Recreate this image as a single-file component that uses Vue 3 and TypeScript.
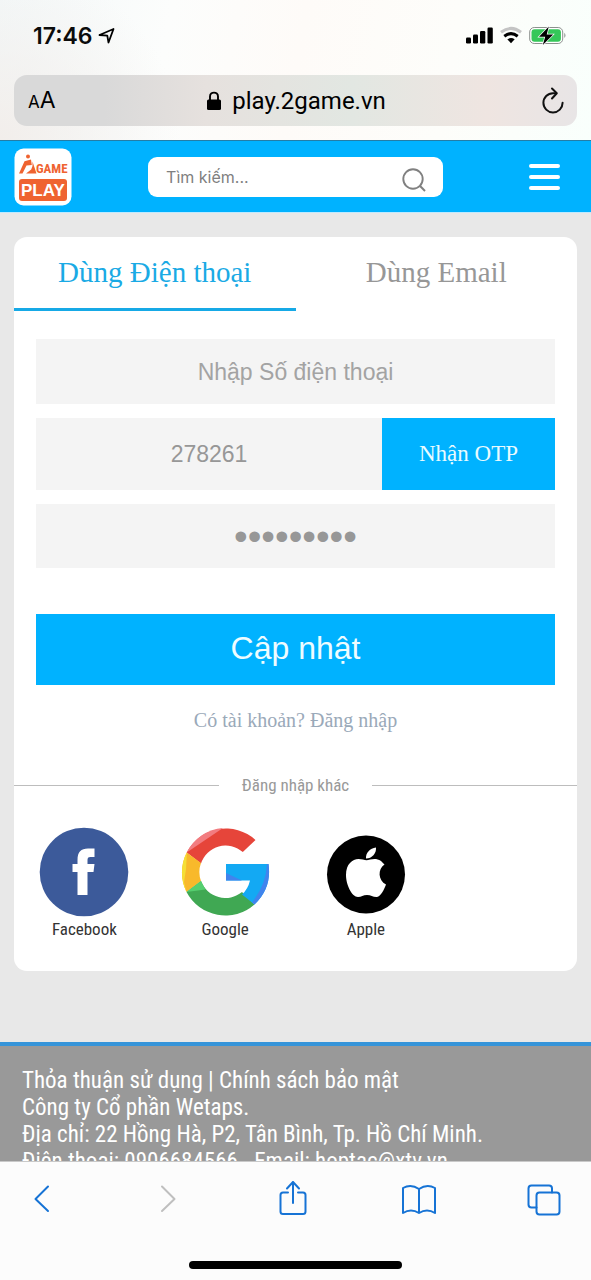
<script setup lang="ts">
import { ref } from 'vue'

type TabKey = 'phone' | 'email'

const tabs: { key: TabKey; label: string }[] = [
  { key: 'phone', label: 'Dùng Điện thoại' },
  { key: 'email', label: 'Dùng Email' },
]
const active = ref<TabKey>('phone')
const search = ref('')
const phone = ref('')
const otp = ref('278261')
const password = ref('matkhau12')
</script>

<template>
  <div class="screen">
    <header class="browser">
      <div class="status">
        <span class="clock">17:46</span>
        <svg class="locate" width="17" height="17" viewBox="0 0 17 17" aria-hidden="true">
          <path d="M1.500 8 15.500 2 10.500 15.500 9.300 8.700Z" fill="none" stroke="#000" stroke-width="1.800" stroke-linejoin="round" />
        </svg>
        <span class="grow"></span>
        <svg width="102" height="20" viewBox="0 0 102 20" aria-hidden="true">
          <g fill="#000">
            <rect x="1" y="11.500" width="5" height="6" rx="1.200" />
            <rect x="8" y="8.500" width="5" height="9" rx="1.200" />
            <rect x="15" y="5" width="5.300" height="12.500" rx="1.200" />
            <rect x="22.500" y="1.500" width="5.300" height="16" rx="1.200" />
          </g>
          <g fill="none" stroke-width="3">
            <path d="M36 6.300Q46 -1.500 56 6.300" stroke="#c4c4c4" />
            <path d="M39.300 10.200Q46 5 52.700 10.200" stroke="#000" />
          </g>
          <path d="M42.300 13.300Q46 10.800 49.700 13.300L46 17.300Z" fill="#000" />
          <rect x="64.700" y="1.500" width="33" height="16" rx="4.500" fill="#fff" stroke="#8c918d" />
          <rect x="66.500" y="3.300" width="29.400" height="12.400" rx="3" fill="#35c759" />
          <path d="M99.300 6.700q2.400 2.700 0 5.400Z" fill="#8c918d" />
          <path d="M83.800 0.500 74 10.700h6.200L77.800 19 88.200 8.500h-6.500Z" fill="#000" stroke="#fff" stroke-width="1.400" paint-order="stroke" />
        </svg>
      </div>
      <div class="address">
        <button class="aa" type="button" aria-label="Cỡ chữ"><span class="small-a">A</span>A</button>
        <div class="url">
          <svg width="14" height="20" viewBox="0 0 14 20" aria-hidden="true">
            <rect x="0" y="8.500" width="14" height="10.500" rx="1.500" />
            <path d="M3 9V5.500C3 0.300 11 0.300 11 5.500V9" fill="none" stroke="#000" stroke-width="1.900" />
          </svg>
          <span>play.2game.vn</span>
        </div>
        <button class="reload" type="button" aria-label="Tải lại">
          <svg width="24" height="28" viewBox="0 0 24 28">
            <path d="M14.500 6.200H12A9.600 9.600 0 1 0 21.600 15.800" fill="none" stroke="#111" stroke-width="2" stroke-linecap="round" />
            <path d="M11 1.500 15.800 6.300 11 11.500" fill="none" stroke="#111" stroke-width="2" stroke-linecap="round" stroke-linejoin="round" />
          </svg>
        </button>
      </div>
    </header>

    <div class="page">
      <nav class="topbar">
        <a class="logo" href="#" aria-label="2GAME PLAY">
          <svg width="58" height="58" viewBox="0 0 58 58">
            <rect x="0.500" y="0.500" width="57" height="57" rx="9" fill="#fff" />
            <circle cx="14" cy="8.500" r="2" fill="#ef6330" />
            <path d="M10.500 13.300 17 11.500 17.800 17 12.500 17.500 8.500 25.500H5L9.500 15.500Z" fill="#ef6330" />
            <path d="M18.500 13.500 22.500 25.500H12L17.200 21.500 18.500 18Z" fill="#ef6330" />
            <rect x="5" y="31" width="48" height="22" rx="3" fill="#ef6330" />
            <text class="logo-game" x="22" y="25">GAME</text>
            <text class="logo-play" x="7" y="48">PLAY</text>
          </svg>
        </a>
        <form class="search" @submit.prevent>
          <input v-model="search" type="search" placeholder="Tìm kiếm..." aria-label="Tìm kiếm" />
          <button type="submit" aria-label="Tìm">
            <svg width="26" height="26" viewBox="0 0 26 26">
              <circle cx="12" cy="12" r="9.700" fill="none" stroke="#808080" stroke-width="1.900" />
              <path d="M18.800 18.800 24 24" stroke="#808080" stroke-width="2" />
            </svg>
          </button>
        </form>
        <button class="menu" type="button" aria-label="Menu"><i></i><i></i><i></i></button>
      </nav>

      <main class="card">
        <div class="tabs" role="tablist">
          <button
            v-for="t in tabs"
            :key="t.key"
            type="button"
            role="tab"
            :aria-selected="active === t.key"
            :class="{ active: active === t.key }"
            @click="active = t.key"
          >{{ t.label }}</button>
        </div>

        <form class="fields" @submit.prevent>
          <input v-model="phone" class="field" type="tel" placeholder="Nhập Số điện thoại" aria-label="Số điện thoại" />
          <div class="otp">
            <input v-model="otp" class="field" type="text" inputmode="numeric" aria-label="Mã OTP" />
            <button type="button">Nhận OTP</button>
          </div>
          <input v-model="password" class="field secret" type="password" autocomplete="off" aria-label="Mật khẩu" />
          <button class="submit" type="submit">Cập nhật</button>
        </form>
        <a class="login" href="#">Có tài khoản? Đăng nhập</a>

        <div class="other"><span>Đăng nhập khác</span></div>

        <div class="social">
          <a href="#">
            <svg width="90" height="90" viewBox="0 0 90 90" aria-hidden="true">
              <circle cx="45" cy="45" r="44.300" fill="#3c5a9a" />
              <path d="M38.500 68V45H33.500V37H38.500V33C38.500 25 42 21.500 49 21.500H55.500V30H51.500C49 30 48.500 31 48.500 33.500V37H55.500L54.500 45H48.500V68Z" fill="#fff" />
            </svg>
            <span>Facebook</span>
          </a>
          <a href="#">
            <svg width="90" height="90" viewBox="0 0 90 90" aria-hidden="true">
              <path d="M6.700 25.600A44 44 0 0 1 75.500 13L62.800 25A26 26 0 0 0 21 36.500Z" fill="#e6453a" />
              <path d="M6.700 25.600A44 44 0 0 1 43 1Z" fill="#f27c80" />
              <path d="M6.700 25.600 21 36A26 26 0 0 0 21 54L6.500 65A44 44 0 0 1 6.700 25.600Z" fill="#f8b92b" />
              <path d="M6.700 25.600A44 44 0 0 0 6.500 65L4 55Q7 40 6.700 25.600Z" fill="#f5df35" />
              <path d="M6.500 65 21 54A26 26 0 0 0 62 65L74.500 77.500A44 44 0 0 1 6.500 65Z" fill="#40a853" />
              <path d="M6.500 65 21 54 25.500 62.500Z" fill="#55cf6f" />
              <path d="M46 37H88.500Q92 61 74.500 77.500L62 67.500Q68 62 70 53.500H46Z" fill="#13a9f3" />
              <path d="M46 46 62 53.500H46ZM87 37H88.500Q92 61 74.500 77.500L72 75.500Q86 58 87 37Z" fill="#4184ed" />
            </svg>
            <span>Google</span>
          </a>
          <a href="#">
            <svg width="90" height="90" viewBox="0 0 90 90" aria-hidden="true">
              <circle cx="45" cy="47.500" r="39" />
              <path d="M45.500 33.200C49 33.200 54 30 60 34L63.500 37.500C56.500 42 57 53.500 65 57.500C63.500 62 59.500 70 55.500 70C51.500 70 50 68 46 68C42 68 40.500 70 37 70C31 70 25 58 25 48C25 37 31.500 32 37.500 32C40.500 32 43.500 33.200 45.500 33.200Z" fill="#fff" />
              <path d="M45 31.500C44.500 26 49 21 55 20.500C55.500 26.500 51 31.500 45 31.500Z" fill="#fff" />
            </svg>
            <span>Apple</span>
          </a>
        </div>
      </main>

      <footer class="footer">
        <div><a href="#">Thỏa thuận sử dụng</a> | <a href="#">Chính sách bảo mật</a></div>
        <div>Công ty Cổ phần Wetaps.</div>
        <div>Địa chỉ: 22 Hồng Hà, P2, Tân Bình, Tp. Hồ Chí Minh.</div>
        <div>Điện thoại: 0906684566 - Email: hoptac@xtv.vn</div>
      </footer>
    </div>

    <div class="toolbar">
      <nav class="tools">
        <button type="button" aria-label="Quay lại">
          <svg width="34" height="36" viewBox="0 0 34 36"><path d="M23 6.500 10.500 19 23 31" /></svg>
        </button>
        <button type="button" class="off" aria-label="Tiếp" disabled>
          <svg width="34" height="36" viewBox="0 0 34 36"><path d="M11 6.500 23.500 19 11 31" /></svg>
        </button>
        <button type="button" aria-label="Chia sẻ">
          <svg width="34" height="36" viewBox="0 0 34 36">
            <path d="M12 12.500H7Q4.500 12.500 4.500 15V31.500Q4.500 34 7 34H27Q29.500 34 29.500 31.500V15Q29.500 12.500 27 12.500H22M17 23V2M11 8.500 17 2 23 8.500" />
          </svg>
        </button>
        <button type="button" aria-label="Dấu trang">
          <svg width="34" height="36" viewBox="0 0 34 36">
            <path d="M17 9Q9 3.500 1 8V33Q9 28 17 33Q25 28 33 33V8Q25 3.500 17 9V33" />
          </svg>
        </button>
        <button type="button" aria-label="Thẻ">
          <svg width="34" height="36" viewBox="0 0 34 36">
            <rect x="9.500" y="12.500" width="23" height="22" rx="3" />
            <path d="M9.500 27.500H4.500Q1.500 27.500 1.500 24.500V8.500Q1.500 5.500 4.500 5.500H22Q25 5.500 25 8.500V12.500" />
          </svg>
        </button>
      </nav>
      <div class="home"></div>
    </div>
  </div>
</template>

<style>
body {
  margin: 0;
}
</style>

<style scoped>
* {
  box-sizing: border-box;
}
button,
input {
  border: 0;
  border-radius: 0;
  padding: 0;
  margin: 0;
  background: none;
  font: inherit;
  color: inherit;
  outline: 0;
  min-width: 0;
}
a {
  color: inherit;
  text-decoration: none;
}
svg {
  display: block;
}
.screen {
  height: 100vh;
  display: flex;
  flex-direction: column;
  overflow: hidden;
  background: #e8e8e8;
  font-family: "Liberation Sans", Arial, sans-serif;
}
.browser {
  flex: none;
  padding: 0 14px 14px;
  background:
    radial-gradient(circle at 0 100%, #f2eeeb 0, rgba(242, 238, 235, 0) 180px),
    linear-gradient(100deg, #f3f8f9 0%, #fcfdfc 28%, #fefbf8 50%, #fdfdfa 75%, #f9fffc 100%);
}
.status {
  height: 75px;
  padding: 0 10px 4px 19px;
  display: flex;
  align-items: center;
}
.clock {
  font: 600 23px/28px Inter, sans-serif;
  color: #0b0b0b;
}
.locate {
  margin-left: 5px;
}
.grow {
  flex: 1;
}
.address {
  height: 51px;
  border-radius: 13px;
  padding: 0 12px 0 14px;
  display: grid;
  grid-template-columns: 60px 1fr 60px;
  align-items: center;
  background: linear-gradient(90deg, #d9d9d9 0%, #d9d9d9 16%, #e6e1de 34%, #e2e7e2 60%, #efe5e1 84%, #e8e5e6 100%);
  color: #000;
}
.aa {
  text-align: left;
  font: 23px/28px Inter, sans-serif;
}
.small-a {
  font-size: 17px;
}
.url {
  display: flex;
  justify-content: center;
  align-items: center;
  gap: 11px;
  font: 24px/30px Roboto, sans-serif;
}
.reload {
  justify-self: end;
}
.page {
  flex: 1;
  min-height: 0;
  overflow: hidden;
}
.topbar {
  height: 73px;
  border-top: 1px solid #247da6;
  border-bottom: 1px solid #bfeaff;
  background: #00b2ff;
  display: flex;
  align-items: center;
  justify-content: space-between;
  padding: 0 31px 0 14px;
}
.logo-game {
  font: 700 13px "Roboto Condensed", "Liberation Sans Narrow", Roboto, sans-serif;
  fill: #ef6330;
}
.logo-play {
  font: 700 17px "Liberation Sans", sans-serif;
  fill: #fff;
}
.search {
  width: 54%;
  height: 40px;
  background: #fff;
  border-radius: 9px;
  display: flex;
  align-items: center;
  padding: 0 16px 0 18px;
}
.search input {
  flex: 1;
  font: 16px/24px Inter, sans-serif;
  color: #777;
  appearance: none;
}
.search input::placeholder {
  color: #808080;
  opacity: 1;
}
.search button {
  padding-top: 6px;
}
.menu {
  width: 41px;
  padding-left: 10px;
  display: grid;
  gap: 7px;
}
.menu i {
  height: 4px;
  border-radius: 2px;
  background: #fff;
}
.card {
  margin: 24px 14px 71px;
  background: #fff;
  border-radius: 13px;
  overflow: hidden;
}
.tabs {
  display: grid;
  grid-template-columns: 1fr 1fr;
}
.tabs button {
  height: 74px;
  padding-bottom: 1px;
  border-bottom: 3px solid transparent;
  font: 29px/32px "Liberation Serif", "Times New Roman", serif;
  color: #979797;
}
.tabs .active {
  color: #1aaae5;
  border-color: #16a9e6;
}
.fields {
  padding: 28px 22px 0;
  display: grid;
  gap: 14px;
}
.field {
  width: 100%;
  height: 65px;
  padding-top: 2px;
  background: #f4f4f4;
  text-align: center;
  font: 23px/28px "Liberation Sans", Arial, sans-serif;
  color: #979797;
}
.field::placeholder {
  color: #a3a3a3;
  opacity: 1;
}
.otp {
  display: grid;
  grid-template-columns: 2fr 1fr;
  height: 72px;
}
.otp .field {
  height: auto;
  padding: 0;
}
.otp button {
  background: #00b2ff;
  color: #e9fbff;
  font: 23px/28px "Liberation Serif", "Times New Roman", serif;
}
.field.secret {
  height: 64px;
  font-size: 39px;
}
.submit {
  margin-top: 32px;
  height: 71px;
  padding-bottom: 2px;
  background: #00b2ff;
  color: #eefcff;
  font-size: 32px;
}
.login {
  display: block;
  margin-top: 22px;
  text-align: center;
  font: 20px/26px "Liberation Serif", "Times New Roman", serif;
  color: #9aa9b9;
}
.other {
  margin-top: 38px;
  display: flex;
  align-items: center;
  gap: 23px;
  font: 17px/28px "Roboto Condensed", "Liberation Sans Narrow", Roboto, sans-serif;
  color: #999;
}
.other::before,
.other::after {
  content: "";
  flex: 1;
  height: 1px;
  background: #bdbdbd;
}
.social {
  margin-top: 28px;
  padding-bottom: 30px;
  display: grid;
  grid-template-columns: repeat(4, 1fr);
}
.social a {
  display: flex;
  flex-direction: column;
  align-items: center;
  font: 17px/24px "Roboto Condensed", "Liberation Sans Narrow", Roboto, sans-serif;
  color: #333;
}
.footer {
  border-top: 4px solid #3594d9;
  background: #999;
  color: #fff;
  padding: 21px 22px;
  font: 23px/27px "Roboto Condensed", "Liberation Sans Narrow", Roboto, sans-serif;
  white-space: nowrap;
}
.toolbar {
  flex: none;
  height: 119px;
  border-top: 1px solid #c9c9c9;
  background: #fcfcfc;
  display: flex;
  flex-direction: column;
  justify-content: space-between;
  align-items: center;
  padding: 18px 0 11px;
}
.tools {
  width: 100%;
  padding: 0 30px 0 25px;
  display: flex;
  justify-content: space-between;
}
.tools svg {
  fill: none;
  stroke: #1673d5;
  stroke-width: 2;
  stroke-linecap: round;
  stroke-linejoin: round;
}
.tools .off svg {
  stroke: #bfbfbf;
}
.home {
  width: 36%;
  height: 8px;
  border-radius: 4px;
  background: #000;
}
</style>
